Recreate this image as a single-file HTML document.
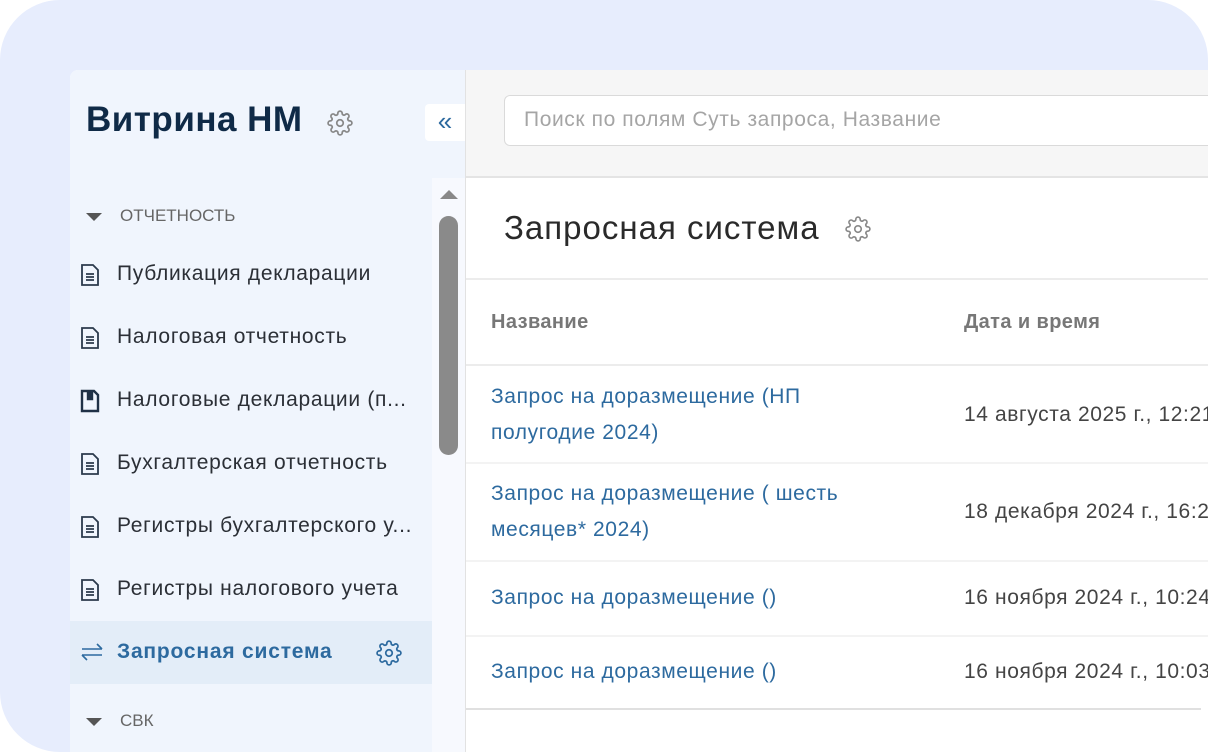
<!DOCTYPE html>
<html><head><meta charset="utf-8"><style>
*{margin:0;padding:0;box-sizing:border-box}
body{width:1208px;height:752px;background:#fff;overflow:hidden;position:relative;font-family:"Liberation Sans","Noto Sans CJK SC",sans-serif}
.bg{position:absolute;left:0;top:0;width:1208px;height:752px;background:#e7edfd;border-radius:60px}
.panel{position:absolute;left:70px;top:70px;width:1138px;height:682px;background:#fff;border-top-left-radius:8px;overflow:hidden}
.side{position:absolute;left:0;top:0;width:395px;height:682px;background:#f0f5fd}
.a{position:absolute;white-space:nowrap}
.item{position:absolute;left:47px;font-size:21px;letter-spacing:0.7px;color:#2b2f36;line-height:24px}
.ic{position:absolute;left:10px}
.sec{position:absolute;left:50px;font-size:17px;color:#666}
.tri{position:absolute;left:16px;width:0;height:0;border-left:8px solid transparent;border-right:8px solid transparent;border-top:8px solid #555}
.main{position:absolute;left:395px;top:0;width:743px;height:682px;background:#fff;border-left:1px solid #e2e2e2}
.top{position:absolute;left:0;top:0;width:743px;height:108px;background:#f6f6f6;border-bottom:2px solid #e4e4e4}
.hl{position:absolute;left:0;height:2px;background:#ececec;width:743px}
.lnk{position:absolute;left:25px;font-size:21px;letter-spacing:0.6px;color:#2d6a9f;line-height:36px;white-space:nowrap}
.dt{position:absolute;left:498px;font-size:21px;letter-spacing:0.6px;color:#444;line-height:24px;white-space:nowrap}
</style></head><body>
<div class="bg"></div>
<div class="panel">
 <div class="side">
  <div class="a" style="left:16px;top:30px;font-size:35px;letter-spacing:0.5px;font-weight:bold;color:#0f2a47">Витрина НМ</div>
  <svg class="a" style="left:257px;top:40px" width="26" height="26" viewBox="0 0 24 24" fill="none" stroke="#888" stroke-width="1.6" stroke-linejoin="round"><circle cx="12" cy="12" r="3"/><path d="M19.4 15a1.65 1.65 0 0 0 .33 1.82l.06.06a2 2 0 0 1-2.83 2.83l-.06-.06a1.65 1.65 0 0 0-1.82-.33 1.65 1.65 0 0 0-1 1.51V21a2 2 0 0 1-4 0v-.09A1.65 1.65 0 0 0 9 19.4a1.65 1.65 0 0 0-1.820.33l-.06.06a2 2 0 0 1-2.830-2.83l.06-.06a1.65 1.65 0 0 0 .33-1.82 1.65 1.65 0 0 0-1.51-1H3a2 2 0 0 1 0-4h.09A1.65 1.65 0 0 0 4.6 9a1.65 1.65 0 0 0-.33-1.82l-.06-.06a2 2 0 0 1 2.83-2.83l.06.06a1.65 1.65 0 0 0 1.82.33H9a1.65 1.65 0 0 0 1-1.51V3a2 2 0 0 1 4 0v.09a1.65 1.65 0 0 0 1 1.51 1.65 1.65 0 0 0 1.82-.33l.06-.06a2 2 0 0 1 2.83 2.83l-.06.06a1.65 1.65 0 0 0-.33 1.82V9a1.65 1.65 0 0 0 1.51 1H21a2 2 0 0 1 0 4h-.09a1.65 1.65 0 0 0-1.51 1z"/></svg>
  <div class="a" style="left:355px;top:34px;width:40px;height:37px;background:#fff;border-radius:4px 0 0 4px;color:#2d6a9f;font-size:26px;text-align:center;line-height:34px">«</div>
  <div class="a" style="left:362px;top:108px;width:33px;height:574px;background:#f7f9fe"></div>
  <div class="a" style="left:370px;top:120px;width:0;height:0;border-left:9px solid transparent;border-right:9px solid transparent;border-bottom:9px solid #888"></div>
  <div class="a" style="left:369px;top:146px;width:19px;height:239px;background:#8a8a8a;border-radius:10px"></div>

  <div class="tri" style="top:143px"></div><div class="sec" style="top:136px">ОТЧЕТНОСТЬ</div>

  <svg class="ic" style="top:193px" width="20" height="24" viewBox="0 0 20 24" fill="none" stroke="#2b3a4c" stroke-width="1.8"><path d="M2 2h11l5 5v15H2z"/><path d="M6 11h8M6 14h8M6 17h8"/></svg>
  <div class="item" style="top:192px">Публикация декларации</div>
  <svg class="ic" style="top:256px" width="20" height="24" viewBox="0 0 20 24" fill="none" stroke="#2b3a4c" stroke-width="1.8"><path d="M2 2h11l5 5v15H2z"/><path d="M6 11h8M6 14h8M6 17h8"/></svg>
  <div class="item" style="top:255px">Налоговая отчетность</div>
  <svg class="ic" style="top:319px" width="20" height="24" viewBox="0 0 20 24" fill="none" stroke="#1f3146" stroke-width="2.4"><path d="M2 2h12l4 4v16H2z"/><path d="M8 2v8h4V2" fill="#1f3146"/></svg>
  <div class="item" style="top:318px">Налоговые декларации (п...</div>
  <svg class="ic" style="top:382px" width="20" height="24" viewBox="0 0 20 24" fill="none" stroke="#2b3a4c" stroke-width="1.8"><path d="M2 2h11l5 5v15H2z"/><path d="M6 11h8M6 14h8M6 17h8"/></svg>
  <div class="item" style="top:381px">Бухгалтерская отчетность</div>
  <svg class="ic" style="top:445px" width="20" height="24" viewBox="0 0 20 24" fill="none" stroke="#2b3a4c" stroke-width="1.8"><path d="M2 2h11l5 5v15H2z"/><path d="M6 11h8M6 14h8M6 17h8"/></svg>
  <div class="item" style="top:444px">Регистры бухгалтерского у...</div>
  <svg class="ic" style="top:508px" width="20" height="24" viewBox="0 0 20 24" fill="none" stroke="#2b3a4c" stroke-width="1.8"><path d="M2 2h11l5 5v15H2z"/><path d="M6 11h8M6 14h8M6 17h8"/></svg>
  <div class="item" style="top:507px">Регистры налогового учета</div>

  <div class="a" style="left:0;top:551px;width:362px;height:63px;background:#e3edf8"></div>
  <svg class="ic" style="top:572px" width="24" height="20" viewBox="0 0 24 20" fill="none" stroke="#2d6a9f" stroke-width="1.6"><path d="M2 7h20M17 2l5 5M22 13H2M7 18l-5-5"/></svg>
  <div class="item" style="top:570px;font-weight:bold;color:#2d6a9f;letter-spacing:0.8px">Запросная система</div>
  <svg class="a" style="left:306px;top:570px" width="26" height="26" viewBox="0 0 24 24" fill="none" stroke="#2d6a9f" stroke-width="1.6" stroke-linejoin="round"><circle cx="12" cy="12" r="3"/><path d="M19.4 15a1.65 1.65 0 0 0 .33 1.82l.06.06a2 2 0 0 1-2.83 2.83l-.06-.06a1.65 1.65 0 0 0-1.82-.33 1.65 1.65 0 0 0-1 1.51V21a2 2 0 0 1-4 0v-.09A1.65 1.65 0 0 0 9 19.4a1.65 1.65 0 0 0-1.82.33l-.06.06a2 2 0 0 1-2.83-2.83l.06-.06a1.65 1.65 0 0 0 .33-1.82 1.65 1.65 0 0 0-1.51-1H3a2 2 0 0 1 0-4h.09A1.65 1.65 0 0 0 4.6 9a1.65 1.65 0 0 0-.33-1.82l-.06-.06a2 2 0 0 1 2.83-2.83l.06.06a1.65 1.65 0 0 0 1.82.33H9a1.65 1.65 0 0 0 1-1.51V3a2 2 0 0 1 4 0v.09a1.65 1.65 0 0 0 1 1.51 1.65 1.65 0 0 0 1.82-.33l.06-.06a2 2 0 0 1 2.83 2.83l-.06.06a1.65 1.65 0 0 0-.33 1.82V9a1.65 1.65 0 0 0 1.51 1H21a2 2 0 0 1 0 4h-.09a1.65 1.65 0 0 0-1.51 1z"/></svg>

  <div class="tri" style="top:648px"></div><div class="sec" style="top:641px">СВК</div>
 </div>
 <div class="main">
  <div class="top">
   <div class="a" style="left:38px;top:25px;width:720px;height:51px;background:#fff;border:1px solid #dadada;border-radius:6px;font-size:21px;letter-spacing:0.6px;color:#a5a5a5;padding:12px 0 0 19px">Поиск по полям Суть запроса, Название</div>
  </div>
  <div class="a" style="left:38px;top:139px;font-size:33px;letter-spacing:1px;color:#2a2a2a">Запросная система</div>
  <svg class="a" style="left:379px;top:146px" width="26" height="26" viewBox="0 0 24 24" fill="none" stroke="#888" stroke-width="1.5" stroke-linejoin="round"><circle cx="12" cy="12" r="3"/><path d="M19.4 15a1.65 1.65 0 0 0 .33 1.82l.06.06a2 2 0 0 1-2.83 2.83l-.06-.06a1.65 1.65 0 0 0-1.82-.33 1.65 1.65 0 0 0-1 1.51V21a2 2 0 0 1-4 0v-.09A1.65 1.65 0 0 0 9 19.4a1.65 1.65 0 0 0-1.82.33l-.06.06a2 2 0 0 1-2.83-2.83l.06-.06a1.65 1.65 0 0 0 .33-1.82 1.65 1.65 0 0 0-1.51-1H3a2 2 0 0 1 0-4h.09A1.65 1.65 0 0 0 4.6 9a1.65 1.65 0 0 0-.33-1.82l-.06-.06a2 2 0 0 1 2.83-2.83l.06.06a1.65 1.65 0 0 0 1.82.33H9a1.65 1.65 0 0 0 1-1.51V3a2 2 0 0 1 4 0v.09a1.65 1.65 0 0 0 1 1.51 1.65 1.65 0 0 0 1.82-.33l.06-.06a2 2 0 0 1 2.83 2.83l-.06.06a1.65 1.65 0 0 0-.33 1.82V9a1.65 1.65 0 0 0 1.51 1H21a2 2 0 0 1 0 4h-.09a1.65 1.65 0 0 0-1.51 1z"/></svg>
  <div class="hl" style="top:208px"></div>
  <div class="a" style="left:25px;top:241px;font-size:20px;letter-spacing:0.4px;font-weight:bold;color:#777">Название</div>
  <div class="a" style="left:498px;top:241px;font-size:20px;letter-spacing:0.4px;font-weight:bold;color:#777">Дата и время</div>
  <div class="hl" style="top:294px"></div>
  <div class="lnk" style="top:309px">Запрос на доразмещение (НП<br>полугодие 2024)</div>
  <div class="dt" style="top:333px">14 августа 2025 г., 12:21</div>
  <div class="hl" style="top:392px;background:#f3f3f3"></div>
  <div class="lnk" style="top:406px">Запрос на доразмещение ( шесть<br>месяцев* 2024)</div>
  <div class="dt" style="top:430px">18 декабря 2024 г., 16:25</div>
  <div class="hl" style="top:490px;background:#f3f3f3"></div>
  <div class="lnk" style="top:510px">Запрос на доразмещение ()</div>
  <div class="dt" style="top:516px">16 ноября 2024 г., 10:24</div>
  <div class="hl" style="top:565px;background:#f3f3f3"></div>
  <div class="lnk" style="top:584px">Запрос на доразмещение ()</div>
  <div class="dt" style="top:590px">16 ноября 2024 г., 10:03</div>
  <div class="hl" style="top:638px;width:735px;background:#e0e0e0"></div>
 </div>
</div>
</body></html>
